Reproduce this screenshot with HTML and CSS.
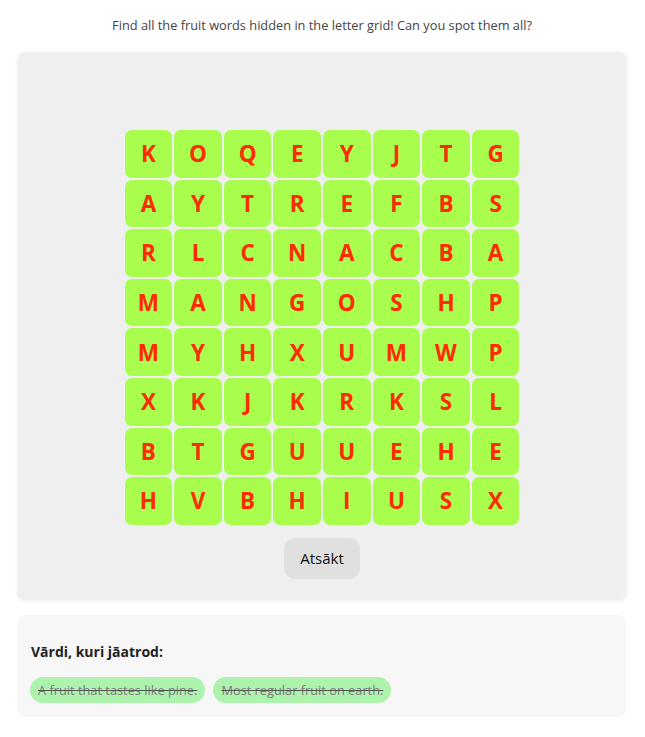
FILE: index.html
```html
<!DOCTYPE html>
<html>
<head>
<meta charset="utf-8">
<link rel="stylesheet" href="styles.css">
</head>
<body>
<p class="intro">Find all the fruit words hidden in the letter grid! Can you spot them all?</p>
<div class="board">
  <div class="grid">
    <div class="cell">K</div><div class="cell">O</div><div class="cell">Q</div><div class="cell">E</div><div class="cell">Y</div><div class="cell">J</div><div class="cell">T</div><div class="cell">G</div>
    <div class="cell">A</div><div class="cell">Y</div><div class="cell">T</div><div class="cell">R</div><div class="cell">E</div><div class="cell">F</div><div class="cell">B</div><div class="cell">S</div>
    <div class="cell">R</div><div class="cell">L</div><div class="cell">C</div><div class="cell">N</div><div class="cell">A</div><div class="cell">C</div><div class="cell">B</div><div class="cell">A</div>
    <div class="cell">M</div><div class="cell">A</div><div class="cell">N</div><div class="cell">G</div><div class="cell">O</div><div class="cell">S</div><div class="cell">H</div><div class="cell">P</div>
    <div class="cell">M</div><div class="cell">Y</div><div class="cell">H</div><div class="cell">X</div><div class="cell">U</div><div class="cell">M</div><div class="cell">W</div><div class="cell">P</div>
    <div class="cell">X</div><div class="cell">K</div><div class="cell">J</div><div class="cell">K</div><div class="cell">R</div><div class="cell">K</div><div class="cell">S</div><div class="cell">L</div>
    <div class="cell">B</div><div class="cell">T</div><div class="cell">G</div><div class="cell">U</div><div class="cell">U</div><div class="cell">E</div><div class="cell">H</div><div class="cell">E</div>
    <div class="cell">H</div><div class="cell">V</div><div class="cell">B</div><div class="cell">H</div><div class="cell">I</div><div class="cell">U</div><div class="cell">S</div><div class="cell">X</div>
  </div>
  <button class="restart">Atsākt</button>
</div>
<div class="words">
  <h3 class="words-title">Vārdi, kuri jāatrod:</h3>
  <div class="chips">
    <span class="chip">A fruit that tastes like pine.</span>
    <span class="chip">Most regular fruit on earth.</span>
  </div>
</div>
</body>
</html>
```
FILE: styles.css
```css
html, body {
  margin: 0;
  padding: 0;
  background: #ffffff;
}
body {
  font-family: "Open Sans", "Liberation Sans", sans-serif;
  padding: 0 19px 0 18px;
  color: #333;
}
.intro {
  margin: 0;
  padding-top: 16px;
  height: 36px;
  font-size: 12.8px;
  line-height: 18px;
  text-align: center;
  color: #444;
}
.board {
  background: #efefef;
  border-radius: 7px;
  box-shadow: 0 1px 4px rgba(0, 0, 0, 0.12);
  padding: 78px 20px 20px;
  display: flex;
  flex-direction: column;
  align-items: center;
}
.grid {
  display: grid;
  grid-template-columns: repeat(8, 47.6px);
  grid-auto-rows: 47.6px;
  gap: 2px;
}
.cell {
  background: #a8fd4d;
  border-radius: 7px;
  display: flex;
  align-items: center;
  justify-content: center;
  color: #ff2a00;
  font-weight: 700;
  font-size: 22.5px;
}
.restart {
  margin-top: 13px;
  width: 76px;
  height: 41px;
  border: none;
  border-radius: 11px;
  background: #e0e0e0;
  font-family: "Open Sans", "Liberation Sans", sans-serif;
  font-size: 15px;
  color: #111;
  padding: 0;
}
.words {
  margin-top: 16px;
  background: #f7f7f7;
  border-radius: 7px;
  padding: 27px 12px 10px;
  height: 65px;
}
.words-title {
  margin: 0 0 15px 1px;
  font-size: 14px;
  line-height: 20px;
  font-weight: 700;
  color: #222;
}
.chips {
  display: flex;
  gap: 8px;
}
.chip {
  background: #adf2ad;
  border-radius: 13px;
  height: 26px;
  line-height: 26px;
  padding: 0 8px;
  font-size: 12.8px;
  color: #7a7a7a;
  text-decoration: line-through;
  text-decoration-color: #555;
}
```
